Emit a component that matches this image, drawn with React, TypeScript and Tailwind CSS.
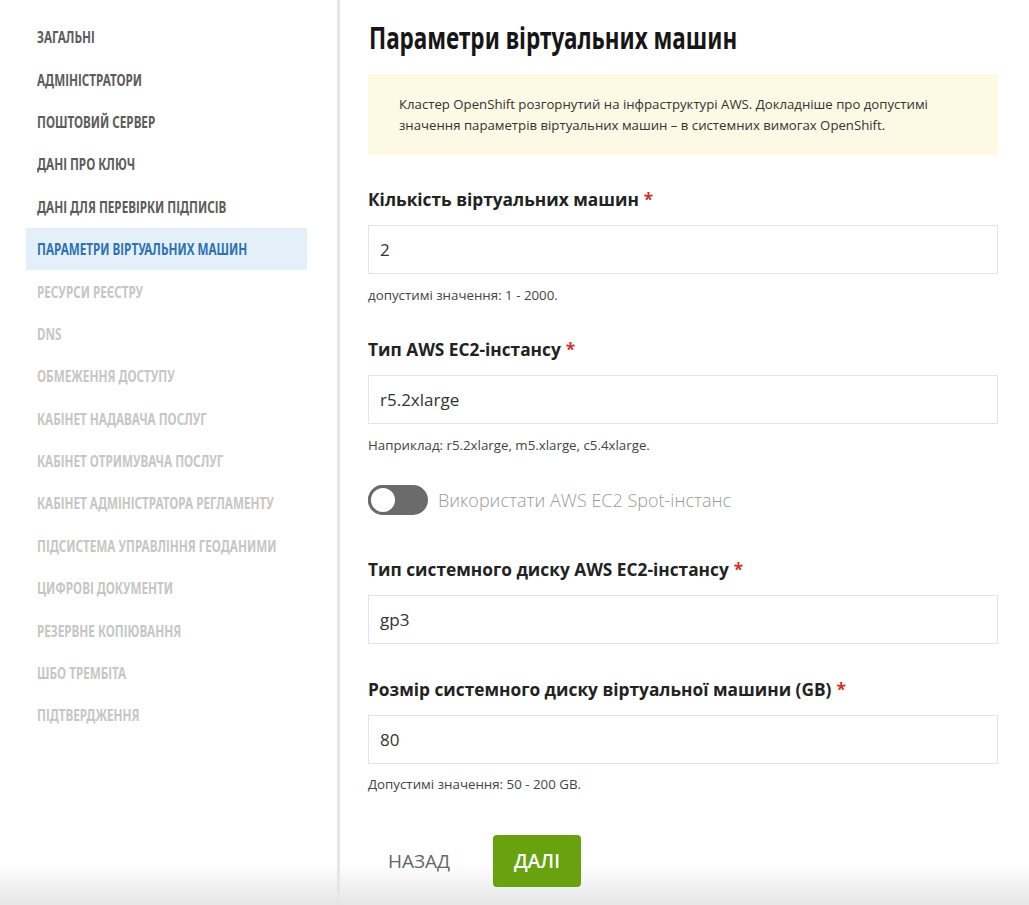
const narrow = "font-['Noto_Sans','DejaVu_Sans',sans-serif]";
const body = "font-['Open_Sans','Noto_Sans',sans-serif]";

type NavItem = { label: string; state: "done" | "active" | "todo" };

const navItems: NavItem[] = [
  { label: "ЗАГАЛЬНІ", state: "done" },
  { label: "АДМІНІСТРАТОРИ", state: "done" },
  { label: "ПОШТОВИЙ СЕРВЕР", state: "done" },
  { label: "ДАНІ ПРО КЛЮЧ", state: "done" },
  { label: "ДАНІ ДЛЯ ПЕРЕВІРКИ ПІДПИСІВ", state: "done" },
  { label: "ПАРАМЕТРИ ВІРТУАЛЬНИХ МАШИН", state: "active" },
  { label: "РЕСУРСИ РЕЄСТРУ", state: "todo" },
  { label: "DNS", state: "todo" },
  { label: "ОБМЕЖЕННЯ ДОСТУПУ", state: "todo" },
  { label: "КАБІНЕТ НАДАВАЧА ПОСЛУГ", state: "todo" },
  { label: "КАБІНЕТ ОТРИМУВАЧА ПОСЛУГ", state: "todo" },
  { label: "КАБІНЕТ АДМІНІСТРАТОРА РЕГЛАМЕНТУ", state: "todo" },
  { label: "ПІДСИСТЕМА УПРАВЛІННЯ ГЕОДАНИМИ", state: "todo" },
  { label: "ЦИФРОВІ ДОКУМЕНТИ", state: "todo" },
  { label: "РЕЗЕРВНЕ КОПІЮВАННЯ", state: "todo" },
  { label: "ШБО ТРЕМБІТА", state: "todo" },
  { label: "ПІДТВЕРДЖЕННЯ", state: "todo" },
];

// no condensed face is installed, so the narrow headings are squeezed horizontally
const Sidebar = () => (
  <aside className="relative z-10 w-[340px] shrink-0 border-r-[3px] border-[#e6e6e6] pt-[16px]">
    {navItems.map((item) => (
      <div
        key={item.label}
        className={`${
          item.state === "active"
            ? "bg-[#e4f0f9] text-[#2f72b3]"
            : item.state === "done"
            ? "text-[#5c5c5c]"
            : "text-[#c6c6c6]"
        } ${narrow} ml-[26px] w-[281px] h-[42.4px] pl-[11px] flex items-center whitespace-nowrap text-[16px] font-bold`}
      >
        <span className="inline-block origin-left scale-x-[0.73]">{item.label}</span>
      </div>
    ))}
  </aside>
);

const Label = ({ text, className }: { text: string; className: string }) => (
  <div className={`${body} ${className} h-[24px] flex items-center text-[17.3px] font-bold text-[#222]`}>
    {text}
    <span className="text-[#d0312d] ml-[5px]">*</span>
  </div>
);

const Field = ({ value }: { value: string }) => (
  <div
    className={`${body} mt-[13px] h-[49px] border border-[#e4e4e4] bg-white flex items-center px-[11px] text-[17px] text-[#333]`}
  >
    {value}
  </div>
);

const Hint = ({ text, className }: { text: string; className: string }) => (
  <div className={`${body} ${className} h-[16px] flex items-center text-[13.3px] text-[#444]`}>{text}</div>
);

export default function App() {
  return (
    <div className="relative flex h-[905px] w-full overflow-hidden bg-white">
      <div className="pointer-events-none absolute left-0 right-0 bottom-0 h-[42px] bg-gradient-to-b from-transparent to-[#e6e6e6]" />
      <Sidebar />
      <main className="relative z-10 flex-1 pl-[28px] pr-[31px] pt-[12px]">
        <h1 className={`${narrow} h-[50px] flex items-center whitespace-nowrap text-[30px] font-bold text-[#161616] pl-[1px]`}>
          <span className="inline-block origin-left scale-x-[0.75]">Параметри віртуальних машин</span>
        </h1>
        <div
          className={`${body} mt-[12px] h-[81px] bg-[#fcf9e4] px-[31px] flex items-center text-[13.2px] leading-[21px] text-[#333]`}
        >
          <p>
            Кластер OpenShift розгорнутий на інфраструктурі AWS. Докладніше про допустимі
            <br />
            значення параметрів віртуальних машин – в системних вимогах OpenShift.
          </p>
        </div>

        <Label text="Кількість віртуальних машин" className="mt-[33px]" />
        <Field value="2" />
        <Hint text="допустимі значення: 1 - 2000." className="mt-[14px]" />

        <Label text="Тип AWS EC2-інстансу" className="mt-[34px]" />
        <Field value="r5.2xlarge" />
        <Hint text="Наприклад: r5.2xlarge, m5.xlarge, c5.4xlarge." className="mt-[14px]" />

        <div className="mt-[31px] flex items-center h-[30px]">
          <div className="w-[60px] h-[30px] rounded-full bg-[#6b6b6b] relative">
            <div className="absolute left-0 top-0 w-[30px] h-[30px] rounded-full bg-white border-[3px] border-[#6b6b6b]" />
          </div>
          <span className={`${body} ml-[10px] text-[18px] font-light text-[#9a9a9a]`}>
            Використати AWS EC2 Spot-інстанс
          </span>
        </div>

        <Label text="Тип системного диску AWS EC2-інстансу" className="mt-[43px]" />
        <Field value="gp3" />

        <Label text="Розмір системного диску віртуальної машини (GB)" className="mt-[34px]" />
        <Field value="80" />
        <Hint text="Допустимі значення: 50 - 200 GB." className="mt-[13px]" />

        <div className="mt-[42px] flex items-center">
          <button className={`${body} w-[92px] h-[52px] text-[19px] text-[#666] pl-[20px] text-left`}>НАЗАД</button>
          <button
            className={`${body} ml-[33px] w-[88px] h-[52px] rounded-[4px] bg-[#68a20e] text-white text-[19px] font-semibold`}
          >
            ДАЛІ
          </button>
        </div>
      </main>
    </div>
  );
}
